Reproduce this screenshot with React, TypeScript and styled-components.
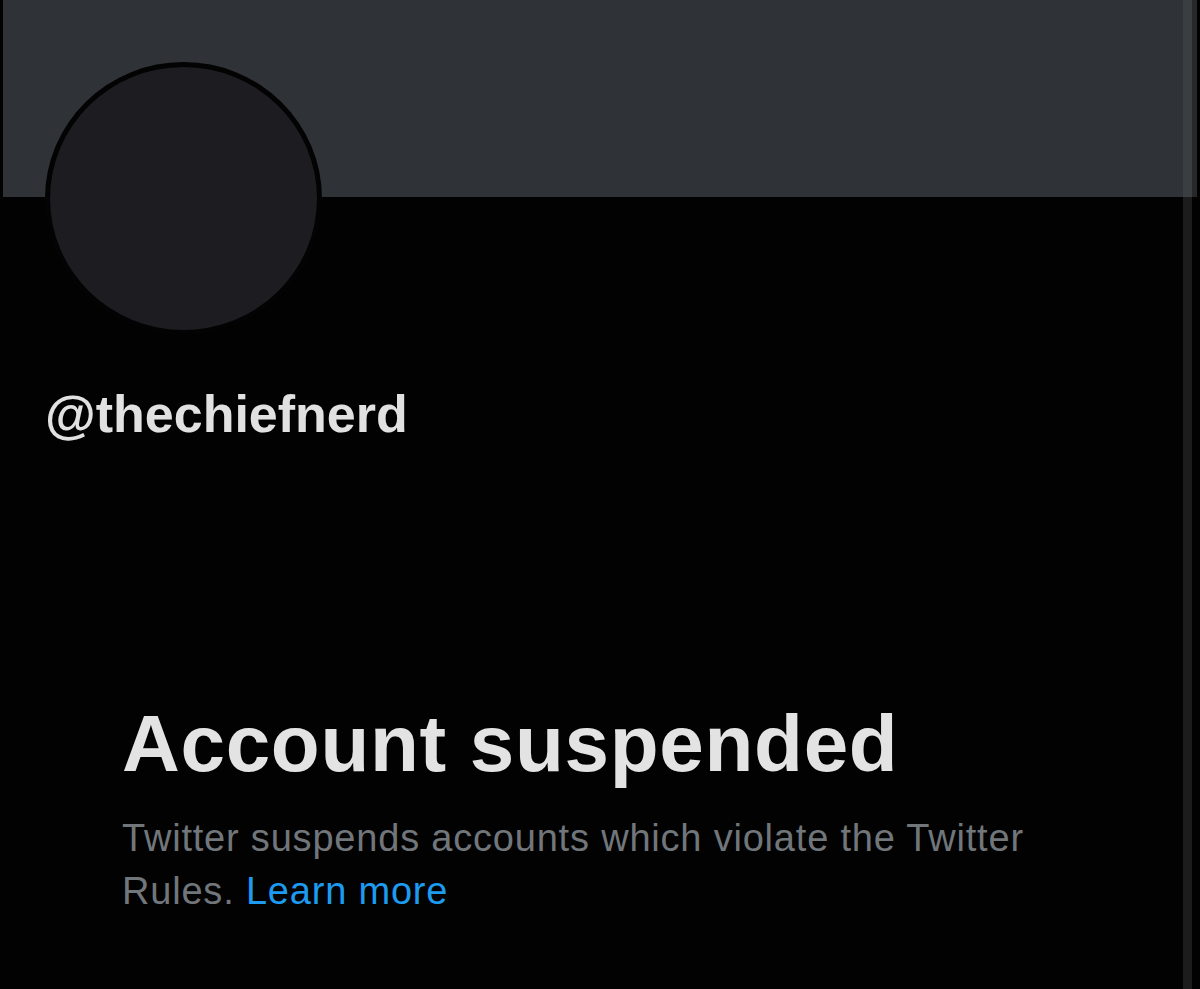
import styled, { createGlobalStyle } from 'styled-components';

const GlobalStyle = createGlobalStyle`
  html, body { margin: 0; padding: 0; background: #020202; }
  body { font-family: 'Liberation Sans', Arial, sans-serif; }
  * { box-sizing: border-box; }
`;

const App = () => {
  return (
    <>
      <GlobalStyle />
      <Page>
        <Profile>
          <Banner />
          <Avatar />
          <Handle>@thechiefnerd</Handle>
          <Notice>
            <Title>Account suspended</Title>
            <Message>
              Twitter suspends accounts which violate the Twitter Rules.{' '}
              <LearnMore href="#">Learn more</LearnMore>
            </Message>
          </Notice>
        </Profile>
        <ScrollTrack>
          <ScrollThumb />
        </ScrollTrack>
        <EdgeStrip>
          <EdgeTop />
        </EdgeStrip>
      </Page>
    </>
  );
};

const Page = styled.div`
  display: flex;
  min-height: 100vh;
  height: 989px;
  overflow: hidden;
  background: #020202;
`;

const Profile = styled.main`
  flex: 1;
  margin-left: 3px;
  display: flex;
  flex-direction: column;
`;

const Banner = styled.div`
  height: 197px;
  background: #2f3236;
`;

const Avatar = styled.div`
  width: 277px;
  height: 273px;
  margin-top: -135px;
  margin-left: 42px;
  border-radius: 50%;
  border: 5px solid #030303;
  background: #1c1c21;
`;

const Handle = styled.div`
  margin: 49px 0 0 42px;
  font-size: 52px;
  font-weight: 700;
  line-height: 60px;
  color: #e1e1e1;
`;

const Notice = styled.section`
  margin: 254px 0 0 119px;
  display: flex;
  flex-direction: column;
  gap: 22px;
`;

const Title = styled.h1`
  margin: 0;
  font-size: 80px;
  font-weight: 700;
  line-height: 92px;
  letter-spacing: 0.7px;
  color: #e3e3e3;
`;

const Message = styled.p`
  margin: 0;
  max-width: 930px;
  font-size: 38px;
  line-height: 53px;
  letter-spacing: 0.8px;
  color: #71767b;
`;

const LearnMore = styled.a`
  color: #1d9bf0;
  text-decoration: none;
`;

const ScrollTrack = styled.div`
  width: 9px;
  background: #1c1c1c;
`;

const ScrollThumb = styled.div`
  height: 197px;
  background: #3b3e40;
`;

const EdgeStrip = styled.div`
  width: 8px;
`;

const EdgeTop = styled.div`
  width: 5px;
  height: 197px;
  background: #26282a;
`;

export default App;
